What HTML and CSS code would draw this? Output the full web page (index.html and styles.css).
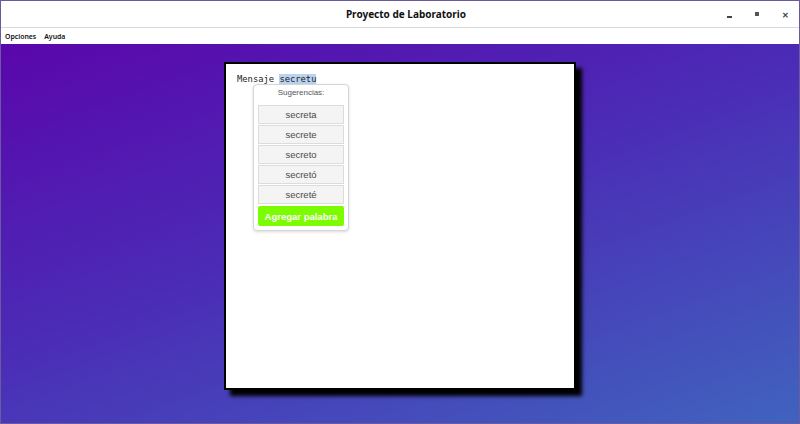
FILE: index.html
```html
<!DOCTYPE html>
<html>
<head>
<meta charset="utf-8">
<link rel="stylesheet" href="styles.css">
</head>
<body>
<div class="window">
  <div class="titlebar">
    <div class="title">Proyecto de Laboratorio</div>
    <div class="controls">
      <span class="ctl min"></span>
      <span class="ctl max"></span>
      <span class="ctl close">✕</span>
    </div>
  </div>
  <div class="menubar">
    <span class="menu">Opciones</span>
    <span class="menu">Ayuda</span>
  </div>
  <div class="desktop">
    <div class="card">
      <div class="editor">Mensaje <span class="sel">secretu</span></div>
      <div class="popup">
        <div class="popup-title">Sugerencias:</div>
        <div class="list">
          <div class="sug">secreta</div>
          <div class="sug">secrete</div>
          <div class="sug">secreto</div>
          <div class="sug">secretó</div>
          <div class="sug">secreté</div>
        </div>
        <div class="add">Agregar palabra</div>
      </div>
    </div>
  </div>
</div>
</body>
</html>
```

FILE: styles.css
```css
html, body { margin: 0; padding: 0; }
body { width: 800px; height: 424px; overflow: hidden; font-family: "Noto Sans", "Open Sans", sans-serif; }
.window { width: 800px; height: 424px; box-sizing: border-box; border: 1px solid #6b5a9e; display: flex; flex-direction: column; }
.titlebar { height: 26px; background: #fff; border-bottom: 1px solid #d9d9d9; position: relative; display: flex; align-items: center; justify-content: center; padding-left: 12px; }
.title { font-weight: bold; font-size: 10px; color: #111; }
.controls { position: absolute; right: 0; top: 0; height: 26px; display: flex; align-items: center; }
.ctl { width: 28px; display: flex; justify-content: center; align-items: center; font-size: 8px; color: #444; }
.min::before { content: ""; width: 5px; height: 2px; background: #444; margin-top: 5px; display: block; }
.max::before { content: ""; width: 4px; height: 4px; background: #555; display: block; }
.close { font-weight: bold; font-size: 8px; }
.menubar { height: 16px; background: #fff; display: flex; align-items: center; padding-left: 4px; gap: 8px; }
.menu { font-size: 6.9px; font-weight: 600; color: #111; }
.desktop { flex: 1; background: linear-gradient(160deg, #5a06ab 0%, #4b2bb6 45%, #4063be 100%); padding: 18px 0 0 223px; }
.card { width: 348px; height: 324px; background: #fff; border: 2px solid #000; box-shadow: 6px 6px 4px #000; position: relative; }
.editor { font-family: "DejaVu Sans Mono", "Liberation Mono", monospace; font-size: 8.8px; color: #222; padding: 9px 0 0 11px; line-height: 13px; }
.sel { background: #b9d3f0; }
.popup { position: absolute; left: 27px; top: 20px; width: 86px; padding: 0 4px 4px; background: #fff; border: 1px solid #d6d6d6; border-radius: 4px; box-shadow: 0 1px 3px rgba(0,0,0,0.15); display: flex; flex-direction: column; align-items: stretch; }
.popup-title { font-family: "Liberation Sans", Arial, sans-serif; font-size: 8px; color: #555; margin-top: 3px; height: 17px; text-align: center; }
.list { display: flex; flex-direction: column; gap: 1px; }
.sug { height: 19px; box-sizing: border-box; background: #f4f4f4; border: 1px solid #dcdcdc; font-family: "Liberation Sans", Arial, sans-serif; font-size: 9.5px; color: #4a4a4a; display: flex; align-items: center; justify-content: center; }
.add { margin-top: 2px; height: 20px; background: #7cfc00; border-radius: 2px; font-family: "Liberation Sans", Arial, sans-serif; font-weight: bold; font-size: 9.5px; color: #fff; display: flex; align-items: center; justify-content: center; }
```
